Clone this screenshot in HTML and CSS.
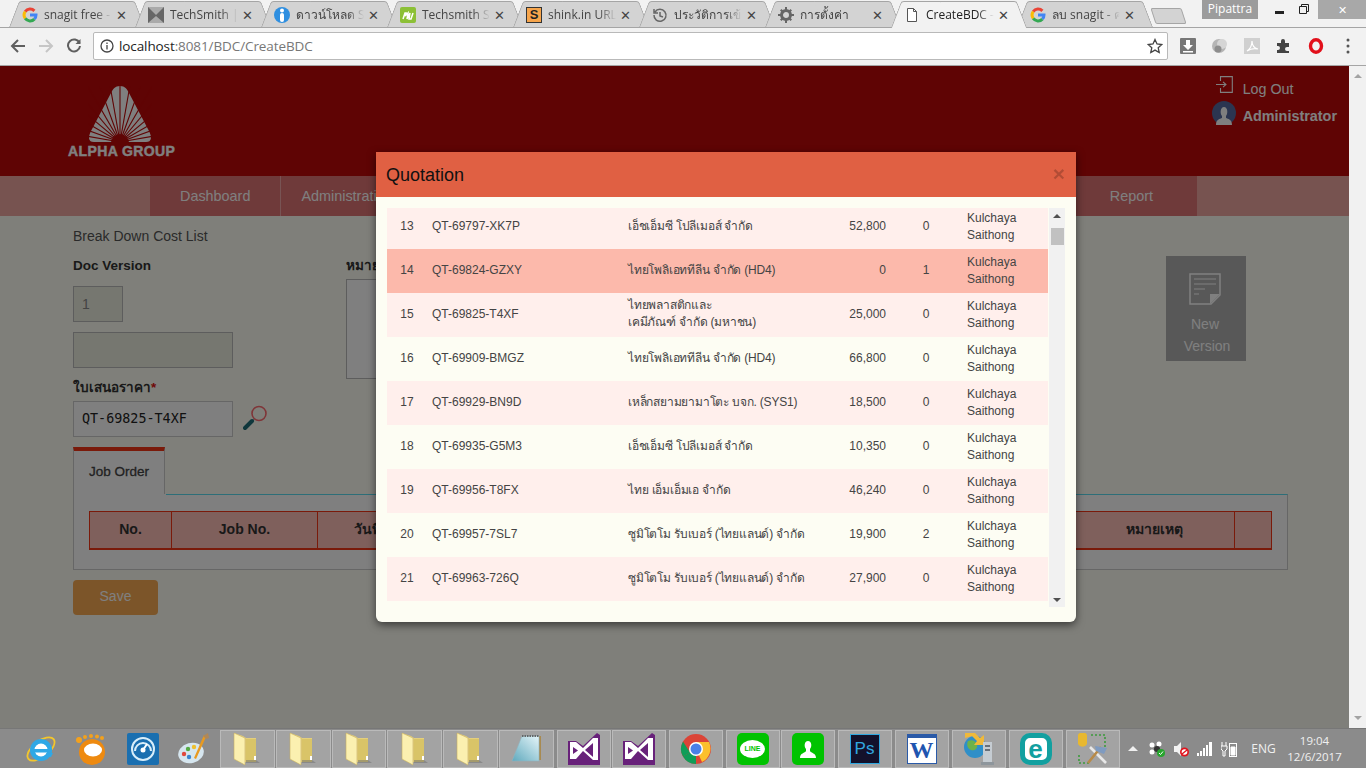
FILE: index.html
```html
<!DOCTYPE html>
<html lang="th">
<head>
<meta charset="utf-8">
<title>CreateBDC</title>
<link rel="stylesheet" href="styles.css">
</head>
<body>
<svg class="defs" aria-hidden="true">
  <defs>
    <linearGradient id="note-grad" x1="0" y1="1" x2="1" y2="0">
      <stop offset="0" stop-color="#5fa9bd"/>
      <stop offset="1" stop-color="#e6f5f9"/>
    </linearGradient>
  </defs>
  <symbol id="g-logo" viewBox="0 0 16 16">
    <g fill="none" stroke-width="3">
      <path d="M3.2 4.6A6 6 0 0 1 12.4 3.9" stroke="#ea4335"/>
      <path d="M3.2 4.6A6 6 0 0 0 3.2 11.4" stroke="#fbbc05"/>
      <path d="M3.2 11.4A6 6 0 0 0 12.4 12.1" stroke="#34a853"/>
      <path d="M12.4 12.1A6 6 0 0 0 14 8H8" stroke="#4285f4"/>
    </g>
  </symbol>
  <symbol id="folder" viewBox="0 0 30 34">
    <path d="M2 1l9 3 3 2h10v24H8l-6-3z" fill="#e4cf7d"/>
    <path d="M2 1l11 5v27L2 27z" fill="#fbf0b0" stroke="#c7b062" stroke-width=".6"/>
    <path d="M14 7h10v23H14z" fill="#d9c468"/>
    <path d="M22 24h2v4h-2z" fill="#fff"/>
    <path d="M14 31h14l-4-3H14z" fill="#6f6f6f" opacity=".5"/>
  </symbol>
  <symbol id="vs-logo" viewBox="0 0 32 32">
    <path d="M0 8h8l7 5L29 0l3 2v30H0z" fill="#68217a"/>
    <path d="M2 9h6l7 6L25 5h5v22h-5L15 18l-7 8H2z" fill="#fff"/>
    <path d="M5 14l5 3.500L5 21z" fill="#68217a"/>
    <path d="M25 10v14l-8-7z" fill="#68217a"/>
  </symbol>
</svg>

<header class="tabstrip">
  <div class="tab"><svg class="favicon"><use href="#g-logo"/></svg><span class="tab-title">snagit free -</span><span class="tab-x">✕</span></div>
  <div class="tab"><svg class="favicon" viewBox="0 0 16 16"><path d="M0 0h16v16H0z" fill="#666"/><path d="M0 0h16L8 8zM0 16h16L8 9z" fill="#aaa"/></svg><span class="tab-title">TechSmith |</span><span class="tab-x">✕</span></div>
  <div class="tab"><svg class="favicon" viewBox="0 0 16 16"><circle cx="8" cy="8" r="8" fill="#2f8fe0"/><rect x="6" y="6" width="4" height="9" rx="2" fill="#fff"/><circle cx="8" cy="3.500" r="2" fill="#fff"/></svg><span class="tab-title">ดาวน์โหลด S</span><span class="tab-x">✕</span></div>
  <div class="tab"><svg class="favicon" viewBox="0 0 16 16"><rect width="16" height="16" rx="2" fill="#8cc036"/><path d="M3 12l2-6 1 0-1 3 3-3-1 6 3-6-1 6 2 0 2-6" fill="none" stroke="#fff" stroke-width="1.500"/></svg><span class="tab-title">Techsmith S</span><span class="tab-x">✕</span></div>
  <div class="tab"><span class="favicon shink">S</span><span class="tab-title">shink.in URL</span><span class="tab-x">✕</span></div>
  <div class="tab"><svg class="favicon" viewBox="0 0 16 16" fill="none" stroke="#666" stroke-width="1.500"><path d="M3 5a6 6 0 1 1-1 3M2 2v4h4"/><path d="M8 5v4l3 1"/></svg><span class="tab-title">ประวัติการเข้</span><span class="tab-x">✕</span></div>
  <div class="tab"><svg class="favicon" viewBox="0 0 16 16"><circle cx="8" cy="8" r="4.500" fill="none" stroke="#666" stroke-width="3"/><path d="M7 0h2v3H7zM7 13h2v3H7zM0 7h3v2H0zM13 7h3v2h-3zM2 3.500L3.500 2l2 2L4 5.500zM10.500 12l1.500-1.500 2 2-1.500 1.500zM2 12.500L4 10.500 5.500 12l-2 2zM10.500 4l2-2L14 3.500l-2 2z" fill="#666"/></svg><span class="tab-title">การตั้งค่า</span><span class="tab-x">✕</span></div>
  <div class="tab tab-active"><svg class="favicon" viewBox="0 0 16 16" fill="#fff" stroke="#555"><path d="M3.500 1.500h6l3 3v10h-9z"/><path d="M9.500 1.500v3h3" fill="none"/></svg><span class="tab-title">CreateBDC -</span><span class="tab-x">✕</span></div>
  <div class="tab"><svg class="favicon"><use href="#g-logo"/></svg><span class="tab-title">ลบ snagit - ค</span><span class="tab-x">✕</span></div>
  <div class="newtab"></div>
  <div class="winctl">
    <span class="win-user">Pipattra</span>
    <svg class="win-min" viewBox="0 0 9 3"><rect width="9" height="3" fill="#222"/></svg>
    <svg class="win-max" viewBox="0 0 10 10" fill="none" stroke="#222"><path d="M.5 2.500h7v7h-7zM2.500 2V.5h7v7H8"/></svg>
    <span class="win-close">✕</span>
  </div>
</header>

<nav class="toolbar">
  <svg class="tool-ic" viewBox="0 0 16 16" fill="none" stroke="#5f5f5f" stroke-width="2"><path d="M15 8H2M8 2L2 8l6 6"/></svg>
  <svg class="tool-ic" viewBox="0 0 16 16" fill="none" stroke="#c6c6c6" stroke-width="2"><path d="M1 8h13M8 2l6 6-6 6"/></svg>
  <svg class="tool-ic" viewBox="0 0 16 16" fill="none" stroke="#5f5f5f" stroke-width="2"><path d="M13.500 5A6 6 0 1 0 14 8"/><path d="M14.500 1v5h-5z" fill="#5f5f5f" stroke="none"/></svg>
  <div class="omnibox">
    <svg class="omni-info" viewBox="0 0 14 14" fill="none" stroke="#444" stroke-width="1.300"><circle cx="7" cy="7" r="6"/><path d="M7 6v4.500M7 3.500v1.500"/></svg>
    <span class="url"><b>localhost</b>:8081/BDC/CreateBDC</span>
    <svg class="omni-star" viewBox="0 0 16 16" fill="none" stroke="#444" stroke-width="1.300"><path d="M8 1.500l2 4.500 4.800.5-3.600 3.200 1 4.800L8 12.100l-4.200 2.400 1-4.800L1.200 6.500 6 6z"/></svg>
  </div>
  <div class="ext-row">
    <svg class="ext" viewBox="0 0 16 16"><rect width="16" height="16" rx="1" fill="#777"/><path d="M6 2h4v5h3l-5 5-5-5h3z" fill="#fff"/><rect x="3" y="13" width="10" height="1.500" fill="#fff"/></svg>
    <svg class="ext" viewBox="0 0 16 16"><circle cx="7" cy="8" r="7" fill="#b5b5b5"/><circle cx="10" cy="6" r="5" fill="#d5d5d5"/><circle cx="6" cy="11" r="3.500" fill="#8d8d8d"/></svg>
    <svg class="ext" viewBox="0 0 16 16"><rect width="16" height="16" fill="#d0d0d0"/><path d="M3 13c3-2 5-6 5-10 0 4 2 7 6 8-4-1-8 0-11 2z" fill="none" stroke="#fff" stroke-width="1.200"/></svg>
    <svg class="ext" viewBox="0 0 16 16"><path d="M1 5h4V3a2 2 0 0 1 4 0v2h4v4h-2a2 2 0 0 0 0 4h2v2H1v-3h1a2 2 0 0 0 0-4H1z" fill="#444"/></svg>
    <svg class="ext" viewBox="0 0 16 16"><ellipse cx="8" cy="8" rx="5.500" ry="6.200" fill="none" stroke="#e2101b" stroke-width="3.400"/></svg>
    <svg class="ext" viewBox="0 0 4 16" fill="#555"><circle cx="2" cy="2" r="1.500"/><circle cx="2" cy="8" r="1.500"/><circle cx="2" cy="14" r="1.500"/></svg>
  </div>
</nav>

<div class="viewport">
  <div class="page">
    <div class="site-head">
      <div class="logo">
        <svg class="logo-mark" viewBox="0 0 64 58">
          <path d="M32 0c5 0 7 3 9 7l20 38c3 6 3 11-3 11H6c-6 0-6-5-3-11L23 7c2-4 4-7 9-7z" fill="#fff"/>
          <g stroke="#bf0808" stroke-width="1.100">
            <path d="M32 56V-10"/>
            <path d="M32 56V-10" transform="rotate(10 32 56)"/><path d="M32 56V-10" transform="rotate(-10 32 56)"/>
            <path d="M32 56V-10" transform="rotate(20 32 56)"/><path d="M32 56V-10" transform="rotate(-20 32 56)"/>
            <path d="M32 56V-10" transform="rotate(30 32 56)"/><path d="M32 56V-10" transform="rotate(-30 32 56)"/>
            <path d="M32 56V-10" transform="rotate(40 32 56)"/><path d="M32 56V-10" transform="rotate(-40 32 56)"/>
            <path d="M32 56V-10" transform="rotate(50 32 56)"/><path d="M32 56V-10" transform="rotate(-50 32 56)"/>
            <path d="M32 56V-10" transform="rotate(60 32 56)"/><path d="M32 56V-10" transform="rotate(-60 32 56)"/>
            <path d="M32 56V-10" transform="rotate(70 32 56)"/><path d="M32 56V-10" transform="rotate(-70 32 56)"/>
            <path d="M32 56V-10" transform="rotate(80 32 56)"/><path d="M32 56V-10" transform="rotate(-80 32 56)"/>
          </g>
          <circle cx="32" cy="57" r="9" fill="#bf0808"/>
        </svg>
        <div class="logo-text">ALPHA GROUP</div>
      </div>
      <div class="user">
        <svg class="user-ic" viewBox="0 0 17 17" fill="none" stroke="#fff" stroke-width="1.100"><path d="M4.500 5V.6h11.800v15.800H4.500V12"/><path d="M0 8.500h10M7 5.800l3 2.700-3 2.700"/></svg>
        <span class="logout">Log Out</span>
        <svg class="avatar" viewBox="0 0 24 24"><circle cx="12" cy="12" r="12" fill="#566aa0"/><path d="M4 24c0-6 4-6 6-7v-2c-2-2-2-9 2-9s4 7 2 9v2c2 1 6 1 6 7z" fill="#fff"/></svg>
        <span class="admin">Administrator</span>
      </div>
    </div>
    <div class="mainnav">
      <div class="mainnav-in">
        <a class="nav-item nav-first">Dashboard</a>
        <a class="nav-item">Administration</a>
        <a class="nav-item nav-last">Report</a>
      </div>
    </div>
    <main class="content">
      <div class="crumb">Break Down Cost List</div>
      <div class="form-top">
        <div>
          <div class="label">Doc Version</div>
          <div class="field field-short field-off">1</div>
          <div class="field field-off field-gap"></div>
          <div class="label label-gap">ใบเสนอราคา<span class="req">*</span></div>
          <div class="quote-row">
            <div class="field field-mono">QT-69825-T4XF</div>
            <svg class="search-ic" viewBox="0 0 25 27"><circle cx="16" cy="8.500" r="7" fill="none" stroke="#ff6a70" stroke-width="1.600"/><path d="M11 14l-2 2" stroke="#bbb" stroke-width="1.500"/><path d="M9 16l-7 7" stroke="#1e6e78" stroke-width="4" stroke-linecap="round"/></svg>
          </div>
        </div>
        <div>
          <div class="label">หมายเหตุ</div>
          <div class="notes"></div>
        </div>
        <div class="newver">
          <svg class="newver-ic" viewBox="0 0 32 32" fill="none" stroke="#fff"><path d="M1 1h30v21l-9 9H1z" stroke-width="1.500"/><path d="M5 6h22M5 11h22M5 16h11M5 21h5" stroke-width="1.200"/><path d="M21 31V21h10z" fill="#fff" stroke="none"/></svg>
          <span>New</span>
          <span class="newver-2">Version</span>
        </div>
      </div>
      <div class="tabs">
        <div class="tabs-head"><div class="tabs-active">Job Order</div></div>
        <div class="tabs-panel">
          <table class="jobs">
            <thead>
              <tr>
                <th class="j-no">No.</th><th class="j-job">Job No.</th><th class="j-date">วันที่</th><th class="j-fill"></th><th class="j-note">หมายเหตุ</th><th class="j-end"></th>
              </tr>
            </thead>
          </table>
        </div>
      </div>
      <div class="save">Save</div>
    </main>

    <div class="backdrop"></div>
    <section class="modal">
      <div class="modal-head"><h4>Quotation</h4><span class="modal-x">×</span></div>
      <div class="modal-body">
        <div class="list">
          <table class="quotes">
            <colgroup><col class="c-no"><col class="c-qt"><col class="c-co"><col class="c-amt"><col class="c-cnt"><col class="c-by"></colgroup>
            <tbody>
              <tr class="odd"><td class="num">13</td><td>QT-69797-XK7P</td><td class="co">เอ็ชเอ็มซี โปลีเมอส์ จำกัด</td><td class="amt">52,800</td><td class="num">0</td><td class="by">Kulchaya<br>Saithong</td></tr>
              <tr class="sel"><td class="num">14</td><td>QT-69824-GZXY</td><td class="co">ไทยโพลิเอททีลีน จำกัด (HD4)</td><td class="amt">0</td><td class="num">1</td><td class="by">Kulchaya<br>Saithong</td></tr>
              <tr class="odd"><td class="num">15</td><td>QT-69825-T4XF</td><td class="co">ไทยพลาสติกและ<br>เคมีภัณฑ์ จำกัด (มหาชน)</td><td class="amt">25,000</td><td class="num">0</td><td class="by">Kulchaya<br>Saithong</td></tr>
              <tr><td class="num">16</td><td>QT-69909-BMGZ</td><td class="co">ไทยโพลิเอททีลีน จำกัด (HD4)</td><td class="amt">66,800</td><td class="num">0</td><td class="by">Kulchaya<br>Saithong</td></tr>
              <tr class="odd"><td class="num">17</td><td>QT-69929-BN9D</td><td class="co">เหล็กสยามยามาโตะ บจก. (SYS1)</td><td class="amt">18,500</td><td class="num">0</td><td class="by">Kulchaya<br>Saithong</td></tr>
              <tr><td class="num">18</td><td>QT-69935-G5M3</td><td class="co">เอ็ชเอ็มซี โปลีเมอส์ จำกัด</td><td class="amt">10,350</td><td class="num">0</td><td class="by">Kulchaya<br>Saithong</td></tr>
              <tr class="odd"><td class="num">19</td><td>QT-69956-T8FX</td><td class="co">ไทย เอ็มเอ็มเอ จำกัด</td><td class="amt">46,240</td><td class="num">0</td><td class="by">Kulchaya<br>Saithong</td></tr>
              <tr><td class="num">20</td><td>QT-69957-7SL7</td><td class="co">ซูมิโตโม รับเบอร์ (ไทยแลนด์) จำกัด</td><td class="amt">19,900</td><td class="num">2</td><td class="by">Kulchaya<br>Saithong</td></tr>
              <tr class="odd"><td class="num">21</td><td>QT-69963-726Q</td><td class="co">ซูมิโตโม รับเบอร์ (ไทยแลนด์) จำกัด</td><td class="amt">27,900</td><td class="num">0</td><td class="by">Kulchaya<br>Saithong</td></tr>
            </tbody>
          </table>
        </div>
        <div class="vbar">
          <span class="vbar-up"></span>
          <span class="vbar-thumb"></span>
          <span class="vbar-down"></span>
        </div>
      </div>
    </section>
  </div>
  <div class="page-bar"><span class="page-up"></span><span class="page-down"></span></div>
</div>

<footer class="taskbar">
  <div class="pin">
    <svg class="pin-ic" viewBox="0 0 32 32"><ellipse cx="16" cy="16" rx="16" ry="8" transform="rotate(-38 16 16)" fill="none" stroke="#f3c62c" stroke-width="1.800"/><circle cx="16" cy="17" r="11" fill="#2fa8e6"/><circle cx="16" cy="17" r="6.500" fill="#fff"/><rect x="6" y="16" width="21" height="3.500" fill="#2fa8e6"/><path d="M22 20h6l-2 4h-7z" fill="#2fa8e6"/><path d="M10 14h12v2H10z" fill="#fff"/></svg>
  </div>
  <div class="pin">
    <svg class="pin-ic" viewBox="0 0 32 32"><circle cx="16" cy="19" r="13" fill="#ee8a10"/><ellipse cx="17" cy="17" rx="9" ry="6.500" fill="#fff"/><circle cx="3" cy="7" r="3" fill="#f4a11c"/><circle cx="9" cy="4" r="2" fill="#f4a11c"/><circle cx="15" cy="3" r="2" fill="#f4a11c"/><circle cx="21" cy="3.500" r="2" fill="#f4a11c"/><circle cx="26" cy="5" r="2" fill="#f4a11c"/></svg>
  </div>
  <div class="pin">
    <svg class="pin-ic" viewBox="0 0 32 32" fill="none"><rect width="32" height="32" rx="2" fill="#1a6fb0"/><circle cx="16" cy="16" r="11" stroke="#d8eefa" stroke-width="2"/><path d="M8 18a8 8 0 1 1 16 0" stroke="#d8eefa" stroke-width="2"/><circle cx="16" cy="17" r="2.500" fill="#fff"/><path d="M16 17l4-6" stroke="#fff" stroke-width="2"/></svg>
  </div>
  <div class="pin">
    <svg class="pin-ic" viewBox="0 0 32 32"><ellipse cx="13" cy="20" rx="13" ry="10" transform="rotate(-15 13 20)" fill="#d6e6ef"/><circle cx="6" cy="21" r="2.200" fill="#e0483c"/><circle cx="10" cy="16" r="2.200" fill="#55aa44"/><circle cx="16" cy="14" r="2.200" fill="#eec030"/><circle cx="11" cy="24" r="2.200" fill="#3a86d0"/><path d="M28 4L18 26l-2-1L26 2z" fill="#e89a20"/><path d="M25 3l5-3 1 5-3 1z" fill="#b08858"/></svg>
  </div>
  <div class="tb-group tb-group-a">
    <div class="tb"><svg class="tb-folder"><use href="#folder"/></svg></div>
    <div class="tb"><svg class="tb-folder"><use href="#folder"/></svg></div>
    <div class="tb"><svg class="tb-folder"><use href="#folder"/></svg></div>
    <div class="tb"><svg class="tb-folder"><use href="#folder"/></svg></div>
    <div class="tb"><svg class="tb-folder"><use href="#folder"/></svg></div>
    <div class="tb"><svg class="tb-ic" viewBox="0 0 32 32"><path d="M29 3h2v24h-2z" fill="#a88a50"/><path d="M12 3h17v25H2z" fill="url(#note-grad)" stroke="#8fb4c0" stroke-width=".6"/><path d="M12 3h17" stroke="#666" stroke-width="2" stroke-dasharray="1.500 1"/></svg></div>
  </div>
  <div class="tb-group">
    <div class="tb"><svg class="tb-ic"><use href="#vs-logo"/></svg></div>
    <div class="tb"><svg class="tb-ic"><use href="#vs-logo"/></svg></div>
  </div>
  <div class="tb-group">
    <div class="tb"><svg class="tb-ic" viewBox="0 0 32 32"><circle cx="16" cy="16" r="15" fill="#db4437"/><path d="M16 16L3 23.500A15 15 0 0 0 16 31z" fill="#0f9d58"/><path d="M3 8.500A15 15 0 0 0 3 23.500l7-4z" fill="#0f9d58"/><path d="M16 9h13a15 15 0 0 1-7 20l-6-13z" fill="#fbc02d"/><circle cx="16" cy="16" r="7" fill="#fff"/><circle cx="16" cy="16" r="5.500" fill="#4a80e8"/></svg></div>
  </div>
  <div class="tb-group">
    <div class="tb"><div class="line-ic"><span class="line-bubble">LINE</span></div></div>
    <div class="tb"><svg class="tb-ic" viewBox="0 0 32 32"><rect width="32" height="32" rx="5" fill="#00c300"/><path d="M8 25c0-5 5-5 6-7v-2c-2-2-2-8 2-8s4 6 2 8v2c1 2 6 2 6 7z" fill="#fff"/></svg></div>
  </div>
  <div class="tb-group">
    <div class="tb"><div class="ps-ic">Ps</div></div>
  </div>
  <div class="tb-group">
    <div class="tb"><div class="word-ic"><span>W</span></div></div>
  </div>
  <div class="tb-group">
    <div class="tb"><svg class="tb-ic" viewBox="0 0 32 32"><circle cx="12" cy="14" r="11" fill="#2f8fc8"/><path d="M5 8c4-2 8 0 9 4s-3 6-6 5-5-5-3-9z" fill="#6cb24a"/><path d="M2 0h10l5 5 4-3v10H11l3-4-5-5-7 2z" fill="#f0b93a"/><path d="M20 9h9v20h-9z" fill="#c5ccd2"/><path d="M18 29h13v3H18z" fill="#8e969c"/><path d="M22 12h5v2h-5zM22 16h5v2h-5z" fill="#67707a"/></svg></div>
  </div>
  <div class="tb-group">
    <div class="tb"><div class="eset-ic"><span>e</span></div></div>
  </div>
  <div class="tb-group">
    <div class="tb"><svg class="tb-ic" viewBox="0 0 32 32"><path d="M1 2a5 5 0 0 1 9 0v9a5 5 0 0 1-9 0z" fill="#e8b830"/><path d="M14 2h14v14M2 22v8h12" fill="none" stroke="#3c9a3c" stroke-width="1.600" stroke-dasharray="2 2"/><path d="M13 14l16 16" stroke="#e8e8e8" stroke-width="2.600"/><path d="M24 14L11 30" stroke="#b88a48" stroke-width="2.600"/><path d="M18 13l12 2-3 6-8-3z" fill="#7f9bc0"/></svg></div>
  </div>
  <div class="tray">
    <span class="tray-item"><span class="tray-up"></span></span>
    <span class="tray-item"><svg class="tray-ic" viewBox="0 0 16 16"><circle cx="3" cy="4" r="2.500" fill="#fff"/><circle cx="10" cy="3" r="2.500" fill="#fff"/><circle cx="3" cy="11" r="2.500" fill="#fff"/><circle cx="8" cy="8" r="3" fill="#333"/><circle cx="12" cy="12" r="4" fill="#27a52e"/><path d="M10 12l1.500 1.500L14 10.500" fill="none" stroke="#fff"/></svg></span>
    <span class="tray-item"><svg class="tray-ic" viewBox="0 0 16 16"><path d="M1 5h3l4-4v14l-4-4H1z" fill="#f2f2f2"/><circle cx="11.500" cy="11" r="4.500" fill="#e0141e"/><circle cx="11.500" cy="11" r="2.800" fill="#fff"/><path d="M9 13l5-4" stroke="#e0141e" stroke-width="1.500"/></svg></span>
    <span class="tray-item"><svg class="tray-ic" viewBox="0 0 16 16" fill="#fff"><path d="M0 12h2v3H0zM3 10h2v5H3zM6 7h2v8H6z"/><path d="M9 4h2v11H9zM12 1h3v14h-3z"/></svg></span>
    <span class="tray-item"><svg class="tray-ic" viewBox="0 0 16 16" fill="none" stroke="#fff"><path d="M1 1v4M5 1v4M0 5h6v3l-2 2v5H2v-5L0 8z"/><rect x="8.500" y="2.500" width="7" height="13"/><path d="M10 6h4v8h-4z" fill="#fff"/></svg></span>
    <span class="tray-lang">ENG</span>
    <span class="tray-clock"><span>19:04</span><span>12/6/2017</span></span>
  </div>
</footer>
</body>
</html>
```

FILE: styles.css
```css
* { box-sizing: border-box; }
html, body { margin: 0; height: 768px; overflow: hidden; }
body {
  display: flex;
  flex-direction: column;
  font-family: "Liberation Sans", "Noto Sans", sans-serif;
  font-size: 14px;
  color: #333;
  background: #f2f2f2;
}
.defs { position: absolute; width: 0; height: 0; }

/* browser tabs */
.tabstrip {
  flex: 0 0 28px;
  min-height: 0;
  display: flex;
  padding-left: 14px;
  background: #f2f2f2;
  border-bottom: 1px solid #a5a5a5;
  font-family: "Open Sans", "Noto Sans", sans-serif;
  font-size: 12px;
  color: #444;
}
.tab {
  position: relative;
  z-index: 1;
  flex: 0 0 126px;
  height: 26px;
  margin-top: 1px;
  padding: 1px 0 0 8px;
  display: flex;
  align-items: center;
}
.tab::before, .tab::after {
  content: "";
  position: absolute;
  top: 0;
  bottom: 0;
  width: 60%;
  background: #d3d3d3;
  border: 1px solid #a5a5a5;
  border-bottom: 0;
  z-index: -1;
}
.tab::before { left: 0; border-right: 0; border-top-left-radius: 3px; transform: skewX(-21deg); }
.tab::after { right: 0; border-left: 0; border-top-right-radius: 3px; transform: skewX(21deg); }
.tab-active { z-index: 2; height: 27px; padding-bottom: 1px; color: #222; }
.tab-active::before, .tab-active::after { background: #f2f2f2; }
.favicon { flex: 0 0 16px; width: 16px; height: 16px; }
.shink {
  display: block;
  background: #f6a54c;
  border: 1px solid #333;
  color: #222;
  font: bold 13px/14px "Liberation Sans", sans-serif;
  text-align: center;
}
.tab-title {
  flex: 0 0 71px;
  margin-left: 6px;
  overflow: hidden;
  white-space: nowrap;
  -webkit-mask-image: linear-gradient(90deg, #000 72%, transparent 96%);
  mask-image: linear-gradient(90deg, #000 72%, transparent 96%);
}
.tab-x { margin-left: 1px; font-size: 13px; line-height: 16px; color: #444; }
.newtab {
  position: relative;
  flex: 0 0 31px;
  height: 16px;
  margin: 8px 0 0 5px;
  background: #d3d3d3;
  border: 1px solid #a5a5a5;
  border-radius: 2px;
  transform: skewX(18deg);
}
.winctl { margin-left: auto; display: flex; align-items: flex-start; height: 19px; }
.win-user {
  width: 56px;
  height: 19px;
  background: #9c9c9c;
  color: #fff;
  font-size: 12px;
  line-height: 18px;
  text-align: center;
}
.win-min { width: 9px; height: 3px; margin: 11px 0 0 17px; }
.win-max { width: 10px; height: 10px; margin: 4px 0 0 15px; }
.win-close {
  width: 48px;
  height: 19px;
  margin-left: 9px;
  background: #a8a8a8;
  color: #fff;
  font-size: 11px;
  line-height: 19px;
  text-align: center;
}

/* browser toolbar */
.toolbar {
  flex: 0 0 38px;
  min-height: 0;
  display: flex;
  align-items: center;
  padding: 0 11px 1px 10px;
  background: #f2f2f2;
  border-bottom: 1px solid #a5a5a5;
}
.tool-ic { flex: 0 0 16px; width: 16px; height: 16px; margin-right: 12px; }
.omnibox {
  flex: 0 0 1075px;
  height: 28px;
  margin-left: -1px;
  display: flex;
  align-items: center;
  padding: 0 4px 0 6px;
  background: #fff;
  border: 1px solid #b9b9b9;
  border-radius: 2px;
}
.omni-info { width: 14px; height: 14px; margin-right: 5px; }
.url { font-family: "Open Sans", "Noto Sans", sans-serif; font-size: 13.500px; color: #777; letter-spacing: -.1px; }
.url b { font-weight: 400; color: #222; }
.omni-star { width: 16px; height: 16px; margin-left: auto; }
.ext-row { display: flex; align-items: center; margin-left: 12px; gap: 16px; }
.ext { flex: 0 0 16px; width: 16px; height: 16px; }

/* page */
.viewport { flex: 1; display: flex; min-height: 0; }
.page {
  position: relative;
  flex: 0 0 1349px;
  overflow: hidden;
  background: #fefff4;
}
.page-bar {
  flex: 1;
  display: flex;
  flex-direction: column;
  justify-content: space-between;
  align-items: center;
  padding: 8px 0;
  background: #f1f1f1;
}
.page-up { border: 4px solid transparent; border-top: 0; border-bottom: 4px solid #a3a3a3; }
.page-down { border: 4px solid transparent; border-bottom: 0; border-top: 4px solid #a3a3a3; }
.site-head {
  height: 110px;
  display: flex;
  justify-content: space-between;
  padding: 10px 12px 0 68px;
  background: #bf0808;
  color: #fff;
}
.logo { width: 107px; padding-top: 10px; text-align: center; }
.logo-mark { display: block; width: 64px; height: 58px; margin: 0 auto 0 20px; }
.logo-text {
  margin-top: 1px;
  font-size: 14px;
  line-height: 13px;
  font-weight: 700;
  letter-spacing: .4px;
  white-space: nowrap;
  -webkit-text-stroke: .4px #fff;
}
.user {
  display: grid;
  grid-template-columns: 24px auto;
  grid-template-rows: 21px 24px;
  column-gap: 7px;
  row-gap: 4px;
  align-items: center;
  height: 49px;
}
.user-ic { width: 17px; height: 17px; margin: 0 0 auto 4px; }
.logout { align-self: end; font-size: 14.300px; line-height: 16px; }
.avatar { width: 24px; height: 24px; }
.admin { margin-top: 5px; font-weight: 700; font-size: 14.400px; }
.mainnav { height: 40px; padding-left: 150px; background: #eea6a0; }
.mainnav-in { width: 1047px; height: 40px; display: flex; background: #de7474; color: #fff; font-size: 14.400px; }
.nav-item { padding: 0 20px; line-height: 40px; border-right: 1px solid #f0a8a8; }
.nav-first { padding: 0 30px; }
.nav-last { margin-left: auto; padding: 0 44px 0 20px; border: 0; }
.content { padding: 10px 61px 0 73px; }
.crumb { font-size: 14px; line-height: 20px; color: #555; }
.form-top {
  display: grid;
  grid-template-columns: 273px 1fr 80px;
  margin-top: 10px;
  padding-right: 42px;
}
.label { height: 18px; padding-top: 1px; font-size: 13.500px; font-weight: 700; line-height: 18px; color: #333; }
.label-gap { margin-top: 10px; }
.req { color: #e01010; }
.field {
  width: 160px;
  height: 36px;
  padding: 0 8px;
  background: #fff;
  border: 1px solid #ccc;
  font-size: 14px;
  line-height: 34px;
}
.field-off { background: #eceee0; border-color: #bbb; color: #888; }
.field-short { width: 50px; margin-top: 12px; }
.field-gap { margin-top: 10px; }
.field-mono { font-family: "DejaVu Sans Mono", monospace; font-size: 13.400px; color: #222; }
.quote-row { display: flex; gap: 10px; margin-top: 5px; }
.search-ic { width: 25px; height: 27px; margin-top: 4px; }
.notes { width: 400px; height: 100px; margin-top: 5px; background: #fff; border: 1px solid #bbb; }
.newver {
  height: 105px;
  display: flex;
  flex-direction: column;
  align-items: center;
  padding: 17px 2px 0 0;
  background: #b0b0b0;
  color: #fff;
  line-height: 22px;
}
.newver-ic { width: 32px; height: 32px; margin-bottom: 8px; }
.newver-2 { margin-left: 4px; }
.tabs { margin-top: 10px; }
.tabs-head { height: 48px; display: flex; }
.tabs-active {
  width: 92px;
  height: 48px;
  background: #fff;
  border: 1px solid #ccc;
  border-top: 4px solid #f43514;
  border-bottom: 0;
  color: #444;
  font-size: 13.500px;
  line-height: 41px;
  text-align: center;
  -webkit-text-stroke: .3px #444;
}
.tabs-panel {
  position: relative;
  height: 76px;
  margin-top: -1px;
  padding: 16px 15px 0;
  background: #fff;
  border: 1px solid #ccc;
  border-top: 1px solid #5adcf0;
}
.tabs-panel::before {
  content: "";
  position: absolute;
  top: -1px;
  left: -1px;
  width: 92px;
  height: 1px;
  background: #fff;
  border-left: 1px solid #ccc;
}
.jobs {
  width: 1183px;
  height: 39px;
  table-layout: fixed;
  border-collapse: collapse;
  background: #ffc0b8;
  border-top: 1px solid #f43514;
  border-bottom: 2px solid #f43514;
}
.jobs th {
  padding: 0 0 2px;
  border-left: 1px solid #f43514;
  border-right: 1px solid #f43514;
  font-size: 14px;
  color: #333;
  text-align: center;
}
.j-no { width: 82px; }
.j-job { width: 146px; }
.j-date { width: 100px; }
.j-note { width: 160px; }
.j-end { width: 37px; }
.save {
  width: 85px;
  height: 35px;
  margin-top: 10px;
  background: #f8aa52;
  border-radius: 4px;
  color: #fff;
  line-height: 33px;
  text-align: center;
}

/* dialog */
.backdrop { position: absolute; inset: 0; background: rgba(0, 0, 0, .5); }
.modal {
  position: absolute;
  left: 376px;
  top: 86px;
  width: 700px;
  height: 470px;
  background: #fdfdf3;
  border-radius: 0 0 6px 6px;
  box-shadow: 0 3px 9px rgba(0, 0, 0, .55);
}
.modal-head {
  height: 45px;
  display: flex;
  justify-content: space-between;
  align-items: center;
  padding: 1px 11px 0 10px;
  background: #e06043;
}
.modal-head h4 { margin: 0; font-size: 18px; font-weight: 400; color: #111; }
.modal-x { margin-bottom: 4px; font-size: 21px; font-weight: 700; line-height: 1; color: #000; opacity: .2; }
.modal-body { display: flex; gap: 1px; padding: 11px 11px 0; }
.list { flex: 0 0 661px; height: 398px; overflow: hidden; }
.quotes {
  width: 661px;
  margin-top: -3px;
  table-layout: fixed;
  border-collapse: collapse;
  font-size: 12px;
  line-height: 17px;
  color: #444;
}
.quotes td { height: 44px; padding: 0 0 2px 5px; }
.quotes td.co { letter-spacing: -.2px; }
.odd { background: #ffefec; }
.sel { background: #fcb9ab; }
.c-no { width: 40px; }
.c-qt { width: 196px; }
.c-co { width: 203px; }
.c-amt { width: 65px; }
.c-cnt { width: 70px; }
.c-by { width: 87px; }
.quotes td.num { padding: 0 0 2px; text-align: center; }
.quotes td.amt { padding: 0 5px 2px 0; text-align: right; }
.quotes td.by { padding: 0 0 0 6px; }
.vbar {
  position: relative;
  flex: 0 0 16px;
  height: 399px;
  background: #f1f1f1;
}
.vbar-up, .vbar-down {
  position: absolute;
  left: 4px;
  border: 4px solid transparent;
}
.vbar-up { top: 6px; border-top: 0; border-bottom: 4px solid #505050; }
.vbar-down { bottom: 5px; border-bottom: 0; border-top: 4px solid #505050; }
.vbar-thumb { position: absolute; left: 2px; top: 20px; width: 13px; height: 17px; background: #c1c1c1; }

/* windows taskbar */
.taskbar {
  flex: 0 0 40px;
  display: flex;
  align-items: center;
  padding-left: 15px;
  background: #8b8b8b;
  border-top: 1px solid #777;
}
.pin { flex: 0 0 51px; height: 38px; display: flex; align-items: center; justify-content: center; }
.pin-ic { width: 32px; height: 32px; }
.tb-group { display: flex; gap: 1px; margin-left: 3px; }
.tb-group-a { margin-left: 1px; }
.tb-group-a .tb { flex-basis: 54.750px; }
.tb {
  flex: 0 0 54px;
  height: 38px;
  display: flex;
  align-items: center;
  justify-content: center;
  background: #a3a3a3;
  border: 1px solid #bababa;
}
.tb-folder { width: 30px; height: 34px; }
.tb-ic { width: 32px; height: 32px; }
.line-ic {
  width: 32px;
  height: 32px;
  display: flex;
  align-items: center;
  justify-content: center;
  background: #00c300;
  border-radius: 5px;
}
.line-bubble {
  width: 25px;
  height: 18px;
  background: #fff;
  border-radius: 50%;
  color: #00c300;
  font-size: 7px;
  font-weight: 700;
  line-height: 18px;
  text-align: center;
}
.ps-ic {
  width: 30px;
  height: 30px;
  background: #13112b;
  border: 1px solid #31a8e0;
  color: #31a8e0;
  font-size: 17px;
  line-height: 28px;
  text-align: center;
}
.word-ic {
  width: 30px;
  height: 30px;
  display: flex;
  align-items: center;
  justify-content: center;
  background: #fff;
  border: 1px solid #2a5aa8;
  border-top: 4px solid #2a5aa8;
}
.word-ic span { color: #1f55b0; font: bold 24px/24px "Liberation Serif", serif; }
.eset-ic {
  width: 32px;
  height: 32px;
  display: flex;
  align-items: center;
  justify-content: center;
  background: #fff;
  border: 5px solid #12a0a0;
  border-radius: 10px;
}
.eset-ic span { color: #12a0a0; font: bold 26px/20px "Liberation Sans", sans-serif; }
.tray { display: flex; align-items: center; margin-left: 1px; color: #f0f0f0; }
.tray-item { flex: 0 0 24px; display: flex; justify-content: center; }
.tray-up { border: 5px solid transparent; border-top: 0; border-bottom: 5px solid #f0f0f0; }
.tray-ic { width: 16px; height: 16px; }
.tray-lang { flex: 0 0 46px; font-family: "Open Sans", sans-serif; font-size: 12px; text-align: center; }
.tray-clock {
  flex: 0 0 56px;
  display: flex;
  flex-direction: column;
  align-items: center;
  font-family: "Open Sans", sans-serif;
  font-size: 11.500px;
  line-height: 16px;
}
```
